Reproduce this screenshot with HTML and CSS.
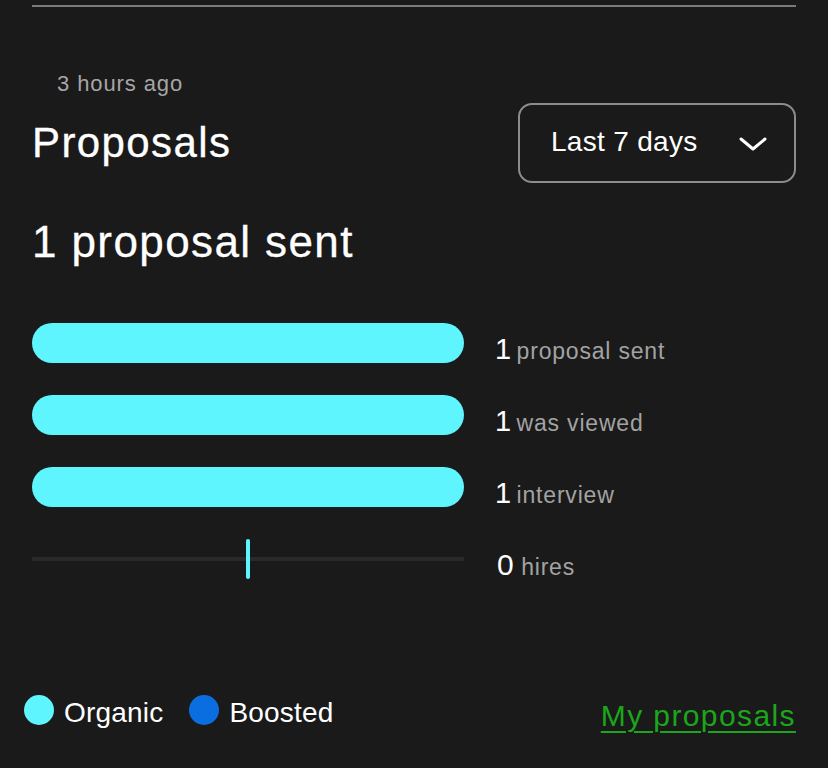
FILE: index.html
```html
<!DOCTYPE html>
<html lang="en">
<head>
<meta charset="utf-8">
<title>Proposals</title>
<link rel="stylesheet" href="styles.css">
</head>
<body>
<div class="card">
  <div class="divider"></div>
  <div class="time">3 hours ago</div>
  <div class="header">
    <h2 class="title">Proposals</h2>
    <div class="dropdown">
      <span class="dropdown-label">Last 7 days</span>
      <svg class="chevron" width="28" height="14" viewBox="0 0 28 14"><polyline points="2,2 14,12 26,2" fill="none" stroke="#ffffff" stroke-width="3" stroke-linecap="round" stroke-linejoin="round"/></svg>
    </div>
  </div>
  <div class="summary">1 proposal sent</div>
  <div class="stats">
    <div class="row">
      <div class="bar-wrap"><div class="bar"></div></div>
      <div class="stat"><span class="num">1</span> <span class="label">proposal sent</span></div>
    </div>
    <div class="row">
      <div class="bar-wrap"><div class="bar"></div></div>
      <div class="stat"><span class="num">1</span> <span class="label">was viewed</span></div>
    </div>
    <div class="row">
      <div class="bar-wrap"><div class="bar"></div></div>
      <div class="stat"><span class="num">1</span> <span class="label">interview</span></div>
    </div>
    <div class="row">
      <div class="bar-wrap empty"><div class="track"></div><div class="marker"></div></div>
      <div class="stat"><span class="num zero">0</span> <span class="label">hires</span></div>
    </div>
  </div>
  <div class="footer">
    <div class="legend">
      <div class="legend-item"><span class="dot organic"></span><span class="legend-text">Organic</span></div>
      <div class="legend-item"><span class="dot boosted"></span><span class="legend-text">Boosted</span></div>
    </div>
    <a class="link" href="#">My proposals</a>
  </div>
</div>
</body>
</html>
```
FILE: styles.css
```css
html, body {
  margin: 0;
  padding: 0;
  background: #1a1a1a;
}
body {
  font-family: "Liberation Sans", Arial, sans-serif;
  color: #ffffff;
  height: 768px;
  overflow: hidden;
}
.card {
  padding: 0 32px;
}
.divider {
  margin-top: 5px;
  height: 2px;
  background: #7a7a7a;
}
.time {
  margin-top: 65px;
  padding-left: 25px;
  font-size: 22px;
  line-height: 24px;
  letter-spacing: 0.9px;
  color: #a6a6a6;
}
.header {
  margin-top: 7px;
  display: flex;
  justify-content: space-between;
  align-items: center;
  height: 80px;
}
.title {
  margin: 0;
  font-size: 42px;
  line-height: 48px;
  font-weight: normal;
  letter-spacing: 1.4px;
  -webkit-text-stroke: 0.3px #ffffff;
}
.dropdown {
  box-sizing: border-box;
  width: 278px;
  height: 80px;
  border: 2px solid #8c8c8c;
  border-radius: 14px;
  display: flex;
  align-items: center;
  justify-content: space-between;
  padding: 0 27px 0 31px;
}
.dropdown-label {
  font-size: 28px;
  line-height: 32px;
  letter-spacing: 0.3px;
  padding-bottom: 2px;
}
.chevron {
  display: block;
  margin-top: 2px;
}
.summary {
  margin-top: 34px;
  font-size: 44px;
  line-height: 50px;
  letter-spacing: 1.4px;
  -webkit-text-stroke: 0.3px #ffffff;
}
.stats {
  margin-top: 56px;
  display: flex;
  flex-direction: column;
  gap: 32px;
}
.row {
  display: flex;
  align-items: flex-start;
  height: 40px;
}
.bar-wrap {
  width: 432px;
  height: 40px;
  flex: none;
  position: relative;
  margin-right: 31px;
}
.bar {
  height: 40px;
  width: 100%;
  border-radius: 20px;
  background: #5ef5ff;
}
.track {
  position: absolute;
  left: 0;
  right: 0;
  top: 18px;
  height: 4px;
  background: #2a2a2a;
}
.marker {
  position: absolute;
  left: 214px;
  top: 0;
  width: 4px;
  height: 40px;
  border-radius: 2px;
  background: #5ef5ff;
}
.stat {
  margin-top: 6px;
  line-height: 40px;
  white-space: nowrap;
}
.num {
  font-size: 29px;
  color: #ffffff;
}
.num.zero {
  margin-left: 2px;
  letter-spacing: 2px;
  font-size: 30px;
}
.label {
  margin-left: 1px;
  font-size: 23px;
  letter-spacing: 0.8px;
  color: #a3a3a3;
}
.footer {
  margin-top: 116px;
  display: flex;
  justify-content: space-between;
  align-items: flex-start;
}
.legend {
  display: flex;
  gap: 26px;
  margin-left: -8px;
}
.legend-item {
  display: flex;
  align-items: center;
  gap: 10px;
}
.dot {
  width: 30px;
  height: 30px;
  border-radius: 50%;
  margin-bottom: 6px;
}
.organic { background: #5ef5ff; }
.boosted { background: #0b6ee0; }
.legend-text {
  font-size: 28px;
  line-height: 32px;
  letter-spacing: 0.2px;
}
.link {
  margin-top: 5px;
  font-size: 30px;
  line-height: 32px;
  letter-spacing: 1.4px;
  color: #1ba61b;
  text-decoration: underline;
  text-decoration-thickness: 2px;
  text-underline-offset: 5px;
}
```
